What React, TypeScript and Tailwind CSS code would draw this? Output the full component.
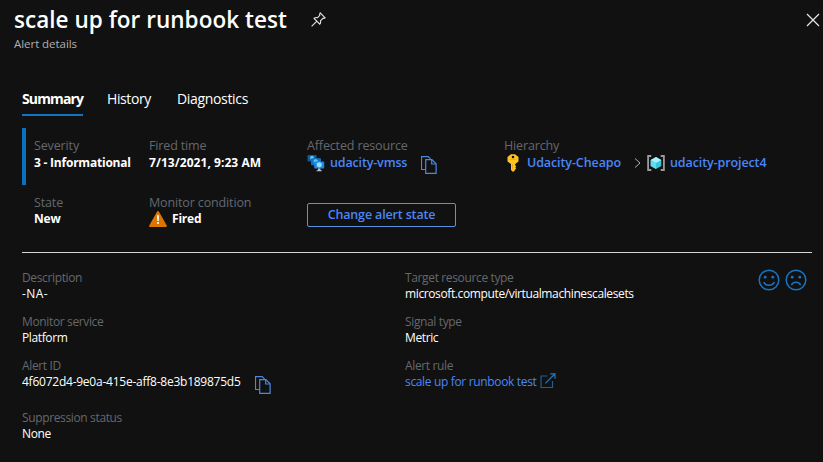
import type { ReactNode } from "react";

function Label({ children, className = "text-[12.5px] tracking-[-0.14px] text-[#65686d]" }: { children: ReactNode; className?: string }) {
  return <div className={`h-4 leading-4 ${className}`}>{children}</div>;
}

function Stat({ label, value, valueClass = "", icon, rowClass = "h-[17px] leading-[17px]" }: {
  label: string;
  value: string;
  valueClass?: string;
  icon?: ReactNode;
  rowClass?: string;
}) {
  return (
    <div>
      <Label>{label}</Label>
      <div className={`flex items-center gap-[5px] text-[12px] font-bold text-white ${rowClass}`}>
        {icon}
        <span className={valueClass}>{value}</span>
      </div>
    </div>
  );
}

function Detail({ label, value, valueClass = "tracking-[-0.38px]", icon }: {
  label: string;
  value: string;
  valueClass?: string;
  icon?: ReactNode;
}) {
  return (
    <div>
      <Label className="text-[12px] tracking-[-0.36px] text-[#65686d]">{label}</Label>
      <div className="flex h-4 items-center text-[12px] leading-4 text-white">
        <span className={valueClass}>{value}</span>
        {icon}
      </div>
    </div>
  );
}

function CopyIcon({ className = "" }: { className?: string }) {
  return (
    <svg className={`shrink-0 ${className}`} width="16" height="18" viewBox="0 0 16 18" fill="none" stroke="#4f86e0" strokeWidth="1.2">
      <path d="M4.5 13.5h-4V.6h6.7l2.3 2.3" />
      <path d="M4.7 3.6h6.2l4.2 4.2v9.5H4.7z" />
      <path d="M10.7 3.8v4.2h4.3" />
    </svg>
  );
}

function PinIcon() {
  return (
    <svg width="15" height="15" viewBox="0 0 15 15" fill="none" stroke="#e4e4e4" strokeWidth="1.1">
      <path d="M9.2.9l4.9 4.9-1.3.6-.9-.1-2.5 2.5c.5 1.4.2 2.5-.6 3.3L3.1 6.4c.8-.8 1.9-1.1 3.2-.6l2.5-2.5-.2-1.1zM5.9 9.2L.6 14.4" />
    </svg>
  );
}

function ScaleSetIcon() {
  return (
    <svg className="shrink-0" width="18" height="17" viewBox="0 0 18 17">
      <rect x=".5" y="0" width="9" height="6.5" rx=".8" fill="#0a5ea6" />
      <path d="M3.2 1.7l1.8-.9 1.8.9v2.4L5 5l-1.8-.9z" fill="#6cc9f0" />
      <rect x="4" y="3.2" width="10" height="7" rx=".8" fill="#1173c8" />
      <path d="M6.7 5l2-1 2 1v2.7l-2 1-2-1z" fill="#5cc4f0" />
      <rect x="7.2" y="6.4" width="10" height="7.2" rx=".8" fill="#2088e4" />
      <path d="M9.8 8.2l2.4-1.2 2.4 1.2v3l-2.4 1.2-2.4-1.2z" fill="#8fe0fa" />
      <path d="M11.1 13.6h2.2l.2 1.4 1.3.4v.9H9.6v-.9l1.3-.4z" fill="#b9c2c9" />
    </svg>
  );
}

function KeyIcon() {
  return (
    <svg className="shrink-0" width="12" height="18" viewBox="0 0 12 18">
      <path fillRule="evenodd" fill="#ffc423" d="M4 .3h4L11.5 3v4.6L8.2 10v1.3l1 1-.9 1 .9 1-1 1.1v.7L6 17.9l-2-2V10L.5 7.6V3zM6 1.7a1.3 1.3 0 100 2.6 1.3 1.3 0 000-2.6z" />
      <path d="M2.8 5.6h6.4M5.5 10v5.4" stroke="#eda514" strokeWidth=".9" />
    </svg>
  );
}

function ResourceGroupIcon() {
  return (
    <svg className="shrink-0" width="18" height="16" viewBox="0 0 18 16">
      <path d="M4.3 1H1.1v14h3.2M13.7 1h3.2v14h-3.2" fill="none" stroke="#9b9b9b" strokeWidth="1.8" />
      <path d="M9 2l5.3 3v6L9 14l-5.3-3V5z" fill="#36c5df" />
      <path d="M9 2l5.3 3L9 8 3.7 5z" fill="#a8f1fa" />
      <path d="M3.7 5L9 8v6l-5.3-3z" fill="#62dcef" />
    </svg>
  );
}

function WarningIcon() {
  return (
    <svg className="shrink-0" width="18" height="16" viewBox="0 0 18 16">
      <path d="M9 1.1L16.9 14.9H1.1z" fill="#db7500" stroke="#db7500" strokeWidth="2" strokeLinejoin="round" />
      <path d="M8 4.3h2l-.3 5.8H8.3z" fill="#fff" />
      <circle cx="9" cy="12" r="1.1" fill="#fff" />
    </svg>
  );
}

function FaceIcon({ happy }: { happy: boolean }) {
  return (
    <svg width="22" height="22" viewBox="0 0 22 22" fill="none" stroke="#1b73bf" strokeWidth="1.5">
      <circle cx="11" cy="11" r="9.8" />
      <circle cx="7.2" cy="8.2" r="1.4" fill="#1b73bf" stroke="none" />
      <circle cx="14.8" cy="8.2" r="1.4" fill="#1b73bf" stroke="none" />
      <path d={happy ? "M5.6 13.1c2.4 4.2 8.4 4.2 10.8 0" : "M6.4 16.2c1.8-3.8 7.4-3.8 9.2 0"} />
    </svg>
  );
}

function ExternalIcon() {
  return (
    <svg className="mb-[3px] ml-[2.5px] shrink-0" width="16" height="16" viewBox="0 0 16 16" fill="none" stroke="#205f94" strokeWidth="1.2">
      <path d="M7.5 3H1v11.5h11.5V8" />
      <path d="M5.3 10.4L15 .8M10.2.8H15v5" stroke="#2477bd" />
    </svg>
  );
}

export default function App() {
  return (
    <main className="flex h-[462px] w-[823px] flex-col overflow-hidden bg-[#111111] font-['Open_Sans','Noto_Sans',sans-serif] whitespace-nowrap text-white">
      <header className="flex h-[84px] items-start justify-between pl-[14px]">
        <div>
          <div className="flex h-9 items-center pt-[3px]">
            <h1 className="w-[297px] text-[22.5px] leading-8 font-semibold tracking-[0.03px]">scale up for runbook test</h1>
            <PinIcon />
          </div>
          <p className="text-[11.5px] leading-4 tracking-[-0.05px] text-[#b0b0b0]">Alert details</p>
        </div>
        <svg className="mt-[13px] mr-[3px]" width="14" height="14" viewBox="0 0 14 14" stroke="#e8e8e8" strokeWidth="1.2">
          <path d="M1 1l12 12M13 1L1 13" />
        </svg>
      </header>

      <nav className="ml-[22px] flex h-8 items-stretch text-[14px] leading-[30px]">
        <div className="w-[61px] border-b-2 border-[#1673c1] font-bold tracking-[-0.88px]">Summary</div>
        <div className="ml-6 w-[46px] tracking-[-0.4px]">History</div>
        <div className="ml-6 tracking-[-0.33px]">Diagnostics</div>
      </nav>

      <section className="mt-3 ml-[22px] flex h-[57px] items-start border-l-4 border-[#0b70c0] pt-[10px] pl-2">
        <div className="w-[115px]">
          <Stat label="Severity" value="3 - Informational" valueClass="tracking-[-0.22px]" />
        </div>
        <div className="w-[158px]">
          <Stat label="Fired time" value="7/13/2021, 9:23 AM" valueClass="tracking-[0.05px]" />
        </div>
        <div className="w-[197px]">
          <Label>Affected resource</Label>
          <div className="flex h-[18px] items-center text-[12.5px] leading-4 font-semibold tracking-[-0.15px] text-[#4a86f7]">
            <ScaleSetIcon />
            <a className="ml-[5px] w-[78px]">udacity-vmss</a>
            <CopyIcon className="mt-1 ml-[13px]" />
          </div>
        </div>
        <div>
          <Label>Hierarchy</Label>
          <div className="flex h-[18px] items-center pl-[3px] text-[12.5px] leading-4 font-semibold tracking-[-0.1px] text-[#4a86f7]">
            <KeyIcon />
            <a className="ml-2 w-[95px]">Udacity-Cheapo</a>
            <svg className="ml-3 w-[7px]" height="10" viewBox="0 0 7 10" fill="none" stroke="#b0b0b0"><path d="M1 .5L6 5 1 9.5" /></svg>
            <span className="ml-[6px]"><ResourceGroupIcon /></span>
            <a className="ml-[5px]">udacity-project4</a>
          </div>
        </div>
      </section>

      <section className="ml-[22px] flex h-[68px] w-[790px] items-start border-b border-[#d8d8d8] pt-[10px] pl-3">
        <div className="w-[115px]"><Stat label="State" value="New" valueClass="tracking-[-0.2px]" rowClass="h-4 leading-4" /></div>
        <div className="w-[158px]">
          <Stat label="Monitor condition" value="Fired" valueClass="tracking-[-0.2px]" rowClass="h-4 leading-4" icon={<WarningIcon />} />
        </div>
        <button className="mt-2 h-6 w-[149px] rounded-[2px] border border-[#5a91e2] pb-px text-[12.5px] leading-[20px] font-semibold tracking-[-0.15px] text-[#4a86f7]">
          Change alert state
        </button>
      </section>

      <section className="flex pt-[17px] pl-[22px]">
        <div className="flex w-[383px] flex-col gap-3">
          <Detail label="Description" value="-NA-" valueClass="tracking-[0.4px]" />
          <Detail label="Monitor service" value="Platform" />
          <Detail label="Alert ID" value="4f6072d4-9e0a-415e-aff8-8e3b189875d5" valueClass="w-[219px] tracking-[-0.24px]" icon={<CopyIcon className="mt-[5px] ml-[14px]" />} />
          <div className="mt-2"><Detail label="Suppression status" value="None" /></div>
        </div>
        <div className="flex w-[353px] flex-col gap-3">
          <Detail label="Target resource type" value="microsoft.compute/virtualmachinescalesets" />
          <Detail label="Signal type" value="Metric" />
          <Detail label="Alert rule" value="scale up for runbook test" valueClass="w-[132px] tracking-[-0.34px] text-[#4a86f7]" icon={<ExternalIcon />} />
        </div>
        <div className="-mt-px flex h-[22px] gap-[5px]">
          <FaceIcon happy />
          <FaceIcon happy={false} />
        </div>
      </section>
    </main>
  );
}
